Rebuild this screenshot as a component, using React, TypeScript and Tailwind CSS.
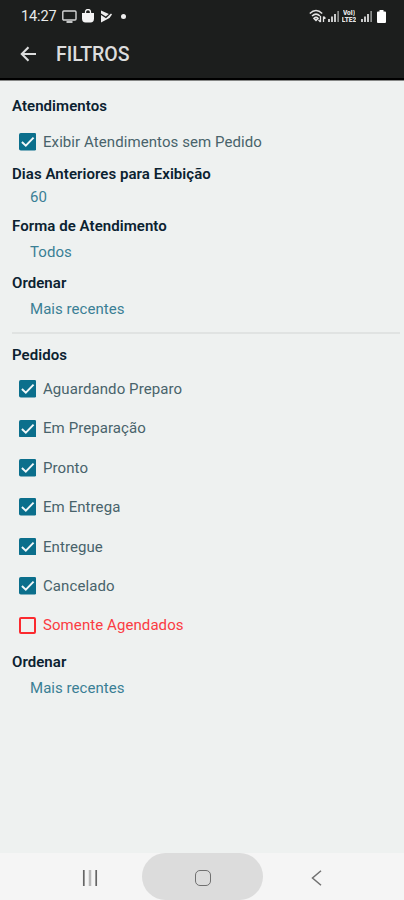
import React from "react";

function Heading({ children, className = "" }: { children: React.ReactNode; className?: string }) {
  return (
    <h2 className={`h-5 pl-3 text-[15px] leading-5 font-semibold tracking-[0.06px] whitespace-nowrap text-[#0b2230] ${className}`}>
      {children}
    </h2>
  );
}

function Value({ children, className = "" }: { children: React.ReactNode; className?: string }) {
  return (
    <div className={`h-5 pl-[30px] text-[15px] leading-5 tracking-[0.05px] whitespace-nowrap text-[#3a7f95] ${className}`}>
      {children}
    </div>
  );
}

function Check({ label, checked = true }: { label: string; checked?: boolean }) {
  return (
    <div className="flex h-5 items-center pl-[18.5px]">
      {checked ? (
        <svg className="size-[17.5px] shrink-0" viewBox="0 0 18 18">
          <rect width="18" height="18" rx="1.8" fill="#0b6f8c" />
          <path d="M3 9.2 7 13l8-8.2" fill="none" stroke="#f2f8f9" strokeWidth="2" />
        </svg>
      ) : (
        <span className="size-[17.5px] shrink-0 rounded-[2px] border-2 border-[#fb2a2f]" />
      )}
      <span
        className={`ml-[7px] text-[15px] leading-5 tracking-[0.08px] whitespace-nowrap ${checked ? "text-[#48636b]" : "text-[#fb3b42]"}`}
      >
        {label}
      </span>
    </div>
  );
}

function Signal() {
  return (
    <svg width="12" height="12" viewBox="0 0 12 12" fill="#c9caca">
      <rect x="0" y="9" width="2" height="3" />
      <rect x="3" y="6.5" width="2" height="5.5" />
      <rect x="6" y="4" width="2" height="8" />
      <rect x="9.3" y="1" width="1.7" height="11" fill="#8b8d8c" />
    </svg>
  );
}

const orders = ["Aguardando Preparo", "Em Preparação", "Pronto", "Em Entrega", "Entregue", "Cancelado"];

export default function App() {
  return (
    <div className="flex h-[900px] w-[404px] flex-col overflow-hidden bg-[#eef1f0] font-['Roboto',sans-serif]">
      <header className="h-[81px] shrink-0 border-b border-[#858786] bg-[#1c1e1d]">
        <div className="flex h-[80px] flex-col border-b-2 border-black">
          <div className="flex h-8 items-center pl-[21px] text-[#e9eaea]">
            <span className="w-[37px] pt-px text-[14.5px] leading-[31px] tracking-[-0.1px]">14:27</span>
            <svg className="ml-1" width="15" height="13" viewBox="0 0 15 13" fill="none" stroke="#d5d6d6" strokeWidth="1.4">
              <rect x=".8" y="1" width="13.2" height="9" rx="1" />
              <path d="M4.5 12h6" strokeWidth="1.8" />
            </svg>
            <svg className="ml-[5px]" width="12" height="14" viewBox="0 0 12 14">
              <path d="M3.5 5V3a2.5 2.5 0 0 1 5 0v2" fill="none" stroke="#f4f4f4" strokeWidth="1.3" />
              <path d="M0 4h12v5.5Q12 13.5 8.5 13.5h-5Q0 13.5 0 9.5Z" fill="#f4f4f4" />
            </svg>
            <svg className="ml-[6px]" width="13" height="13" viewBox="0 0 13 13" fill="#eee">
              <path d="M1 5v7.500L9.500 8 12 4.500 11 3.500 6 8.300Z" />
              <path d="M1 .5v3L5.800 6.500 8.800 4Z" />
            </svg>
            <span className="ml-[8px] size-[5px] rounded-full bg-[#eee]" />
            <div className="mr-[18.5px] ml-auto flex items-center">
              <svg width="17" height="14" viewBox="0 0 17 14" fill="none" stroke="#e4e4e4" strokeWidth="1.5">
                <path d="M.8 4.5q6.2-6 12.4 0M3 7q4-3.8 8 0M5 9.4q2-2 4 0L7 11.5Z" />
                <path d="M11.5 7v6m-2-2 2 2M14.5 13V7.5m0 0 2 2" strokeWidth="1.3" />
              </svg>
              <span className="ml-[2px] flex"><Signal /></span>
              <span className="ml-[2px] flex w-[15px] flex-col items-center gap-px text-[6.5px] leading-[6px] font-black text-[#e4e4e4]">
                <span className="h-[6px] overflow-hidden">VoI)</span>
                <span className="h-[6px] overflow-hidden">LTE2</span>
              </span>
              <span className="ml-[4px] flex"><Signal /></span>
              <svg className="ml-[4px]" width="9" height="13" viewBox="0 0 9 13" fill="#fff">
                <path d="M2.5 0h4v1.5H8q1 0 1 1V12q0 1-1 1H1q-1 0-1-1V2.5q0-1 1-1h1.5Z" />
              </svg>
            </div>
          </div>
          <div className="flex h-11 items-center pl-5">
            <svg width="17" height="16" viewBox="0 0 17 16" fill="none" stroke="#dcdddd" strokeWidth="2.1">
              <path d="M16 8H2M8.5 1.3 1.8 8l6.7 6.7" />
            </svg>
            <h1 className="ml-[19px] pt-[2px] text-[19.5px] leading-6 font-medium tracking-[-0.05px] text-[#dcdddd]">FILTROS</h1>
          </div>
        </div>
      </header>

      <main className="flex flex-1 flex-col">
        <Heading className="mt-[15px]">Atendimentos</Heading>
        <div className="mt-4">
          <Check label="Exibir Atendimentos sem Pedido" />
        </div>
        <Heading className="mt-[12px]">Dias Anteriores para Exibição</Heading>
        <Value className="mt-[3px]">60</Value>
        <Heading className="mt-[9px]">Forma de Atendimento</Heading>
        <Value className="mt-[6px]">Todos</Value>
        <Heading className="mt-[11px]">Ordenar</Heading>
        <Value className="mt-[6px]">Mais recentes</Value>
        <div className="mt-[13px] mr-1 ml-3 h-[2px] bg-[#e0e3e2]" />
        <Heading className="mt-[11px]">Pedidos</Heading>
        <div className="mt-[14px] flex flex-col gap-[19.4px]">
          {orders.map((label) => (
            <Check key={label} label={label} />
          ))}
          <Check label="Somente Agendados" checked={false} />
        </div>
        <Heading className="mt-[16.6px]">Ordenar</Heading>
        <Value className="mt-[6px]">Mais recentes</Value>
      </main>

      <nav className="flex h-[47px] shrink-0 items-center bg-[#f5f5f5]">
        <svg className="mt-[3px] ml-[82px]" width="16" height="16" viewBox="0 0 16 16">
          <path d="M1.8 0v16M14.2 0v16" stroke="#666" strokeWidth="1.7" />
          <path d="M8 0v16" stroke="#b9b9b9" strokeWidth="2.5" />
        </svg>
        <div className="ml-[44px] flex h-[47px] w-[121px] items-center justify-center rounded-full bg-[#dcdcdc]">
          <span className="mt-[3px] size-[16px] rounded-[5px] border-[1.5px] border-[#707070]" />
        </div>
        <svg className="mt-[3px] ml-[48px]" width="11" height="16" viewBox="0 0 11 16" fill="none" stroke="#707070" strokeWidth="1.5">
          <path d="M10 .7 1.5 8l8.5 7.3" />
        </svg>
      </nav>
    </div>
  );
}
